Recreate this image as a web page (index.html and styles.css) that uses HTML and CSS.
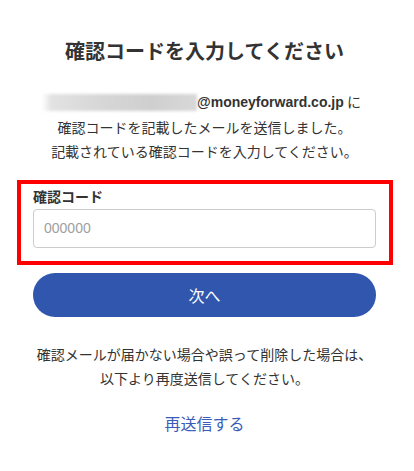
FILE: index.html
```html
<!DOCTYPE html>
<html lang="ja">
<head>
<meta charset="utf-8">
<title>確認コードを入力してください</title>
<link rel="stylesheet" href="styles.css">
</head>
<body>
<main class="page">
  <h1 class="title">確認コードを入力してください</h1>
  <p class="lead">
    <span class="masked"></span><span class="domain">@moneyforward.co.jp</span> <span class="to">に</span><br>
    確認コードを記載したメールを送信しました。<br>
    記載されている確認コードを入力してください。
  </p>
  <form class="form">
    <div class="field">
      <label class="label" for="code">確認コード</label>
      <input class="input" id="code" type="text" placeholder="000000">
    </div>
    <button class="btn" type="button">次へ</button>
  </form>
  <p class="note">確認メールが届かない場合や誤って削除した場合は、<br>以下より再度送信してください。</p>
  <p class="resend"><a class="link" href="#">再送信する</a></p>
</main>
</body>
</html>
```

FILE: styles.css
```css
html, body {
  margin: 0;
  padding: 0;
  background: #ffffff;
}

body {
  font-family: "Noto Sans CJK JP", "Liberation Sans", sans-serif;
  color: #333333;
}

.page {
  width: 343px;
  padding: 36px 38px 0 33px;
}

.title {
  margin: 0;
  font-size: 20px;
  line-height: 30px;
  font-weight: 700;
  text-align: center;
  color: #333333;
}

.lead {
  margin: 23px 0 0;
  font-size: 14px;
  line-height: 24.5px;
  text-align: center;
}

.masked {
  display: inline-block;
  width: 155px;
  height: 17px;
  vertical-align: -4px;
  background: linear-gradient(90deg, rgba(225,225,225,0) 0%, #e2e2e2 6%, #d6d6d6 40%, #cfcfcf 70%, #d8d8d8 100%);
  filter: blur(1.5px);
}

.domain {
  font-family: "Liberation Sans", Arial, sans-serif;
  font-weight: 700;
  font-size: 14px;
  color: #333333;
}

.to {
  margin-right: 6px;
}

.form {
  margin: 16px 0 0;
}

.field {
  display: flex;
  flex-direction: column;
  gap: 3px;
  margin: 0 -17px 0 -16px;
  padding: 2px 13px 13px 12px;
  border: 4px solid #ff0000;
}

.label {
  font-size: 14px;
  line-height: 20px;
  font-weight: 700;
  color: #333333;
}

.input {
  box-sizing: border-box;
  width: 100%;
  height: 39px;
  margin: 0;
  padding: 0 10px;
  border: 1px solid #cccccc;
  border-radius: 4px;
  font-family: "Liberation Sans", Arial, sans-serif;
  font-size: 14px;
  color: #333333;
  background: #ffffff;
}

.input::placeholder {
  color: #a0a0a0;
}

.btn {
  display: block;
  width: 100%;
  height: 44px;
  margin: 8px 0 0;
  padding: 0;
  border: 0;
  border-radius: 22px;
  background: #3056ae;
  color: #ffffff;
  font-family: "Noto Sans CJK JP", sans-serif;
  font-size: 16px;
  line-height: 44px;
}

.note {
  margin: 25px 0 0;
  font-size: 14px;
  line-height: 24px;
  text-align: center;
}

.resend {
  margin: 21px 0 0;
  font-size: 16px;
  line-height: 24px;
  text-align: center;
}

.link {
  color: #3a5cb8;
  text-decoration: none;
}
```
